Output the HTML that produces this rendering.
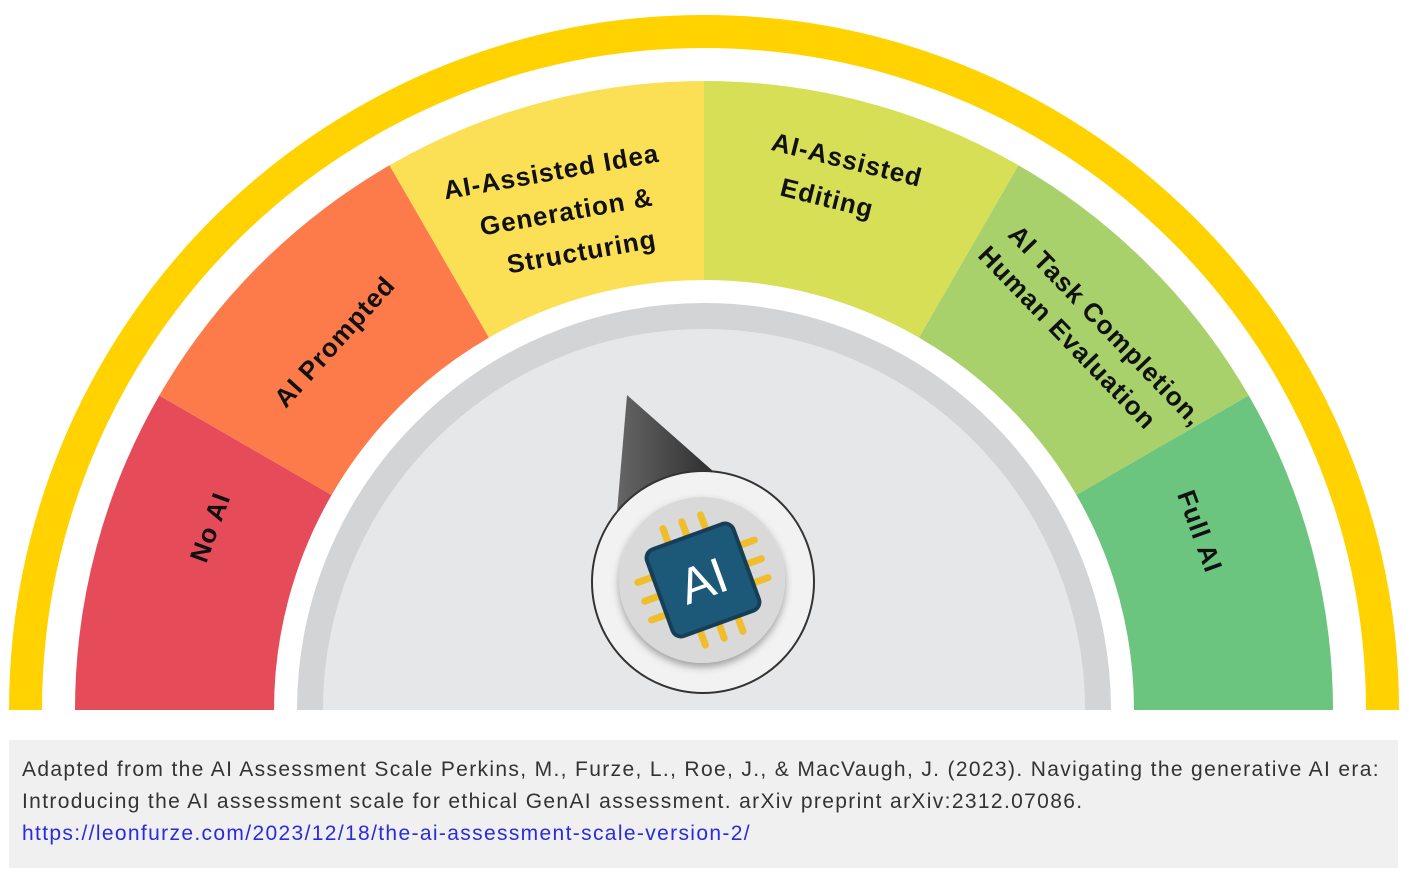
<!DOCTYPE html>
<html><head><meta charset="utf-8"><style>
html,body{margin:0;padding:0;background:#fff;width:1409px;height:874px;overflow:hidden}
.cap{position:absolute;left:9px;top:740px;width:1389px;height:128px;background:#f0f0f0;font-family:"Liberation Sans",sans-serif;font-size:21px;letter-spacing:1.35px;color:#333;line-height:32px;box-sizing:border-box;padding:14px 0 0 13px;white-space:nowrap;overflow:hidden}
.cap a{color:#2a2ae0;text-decoration:none}
</style></head><body>
<svg width="1409" height="740" style="position:absolute;left:0;top:0" font-family="Liberation Sans, sans-serif" font-weight="bold" font-size="26" letter-spacing="1" fill="#111">
<defs>
<clipPath id="c"><rect x="0" y="0" width="1409" height="710"/></clipPath>
<linearGradient id="n" x1="0" x2="1"><stop offset="0" stop-color="#666"/><stop offset="1" stop-color="#2e2e2e"/></linearGradient>
<filter id="sh" x="-20%" y="-20%" width="140%" height="140%"><feDropShadow dx="0" dy="4" stdDeviation="4" flood-opacity="0.35"/></filter>
</defs>
<g clip-path="url(#c)">
<circle cx="704" cy="710" r="678.5" fill="none" stroke="#ffd200" stroke-width="33"/>
<path d="M75,710 A629,629 0 0 1 159.3,395.5 L331.6,495 A430,430 0 0 0 274,710Z" fill="#e64b5a"/>
<path d="M159.3,395.5 A629,629 0 0 1 389.5,165.3 L489,337.6 A430,430 0 0 0 331.6,495Z" fill="#fd7b4b"/>
<path d="M389.5,165.3 A629,629 0 0 1 704,81 L704,280 A430,430 0 0 0 489,337.6Z" fill="#fbe055"/>
<path d="M704,81 A629,629 0 0 1 1018.5,165.3 L919,337.6 A430,430 0 0 0 704,280Z" fill="#d6df56"/>
<path d="M1018.5,165.3 A629,629 0 0 1 1248.7,395.5 L1076.4,495 A430,430 0 0 0 919,337.6Z" fill="#a8d16c"/>
<path d="M1248.7,395.5 A629,629 0 0 1 1333,710 L1134,710 A430,430 0 0 0 1076.4,495Z" fill="#6cc57e"/>
<circle cx="704" cy="710" r="394" fill="#e6e7e9" stroke="#d3d4d6" stroke-width="26"/>
</g>
<text transform="translate(212,528) rotate(-70)" text-anchor="middle" dominant-baseline="middle">No AI</text>
<text transform="translate(336,343) rotate(-48)" text-anchor="middle" dominant-baseline="middle">AI Prompted</text>
<g transform="translate(558,210) rotate(-10)" text-anchor="middle">
<text x="0" y="-30">AI-Assisted Idea</text>
<text x="8" y="12">Generation &amp;</text>
<text x="16" y="54">Structuring</text>
</g>
<g transform="translate(842,180) rotate(14)" text-anchor="middle">
<text x="0" y="-12">AI-Assisted</text>
<text x="-10" y="30">Editing</text>
</g>
<g transform="translate(1084,330) rotate(46)" text-anchor="middle">
<text x="12" y="-10">AI Task Completion,</text>
<text x="-6" y="26">Human Evaluation</text>
</g>
<text transform="translate(1198,532) rotate(70)" text-anchor="middle" dominant-baseline="middle">Full AI</text>
<polygon points="627,395 617,512 714,472" fill="url(#n)"/>
<circle cx="703" cy="582" r="111" fill="#f2f2f2" stroke="#333" stroke-width="2"/>
<circle cx="702" cy="580" r="83" fill="#d9d9d9" filter="url(#sh)"/>
<g transform="translate(703,580) rotate(-20)" stroke="#f0bd2c" stroke-width="7" stroke-linecap="round">
<line x1="-20" y1="-48" x2="-20" y2="-62"/><line x1="0" y1="-48" x2="0" y2="-62"/><line x1="20" y1="-48" x2="20" y2="-62"/>
<line x1="-20" y1="48" x2="-20" y2="62"/><line x1="0" y1="48" x2="0" y2="62"/><line x1="20" y1="48" x2="20" y2="62"/>
<line y1="-20" x1="-48" y2="-20" x2="-62"/><line y1="0" x1="-48" y2="0" x2="-62"/><line y1="20" x1="-48" y2="20" x2="-62"/>
<line y1="-20" x1="48" y2="-20" x2="62"/><line y1="0" x1="48" y2="0" x2="62"/><line y1="20" x1="48" y2="20" x2="62"/>
<rect x="-46" y="-46" width="92" height="92" rx="9" fill="#1c5877" stroke="#163f57" stroke-width="4"/>
<text x="0" y="18" text-anchor="middle" font-size="50" font-weight="normal" letter-spacing="0" fill="#fff" stroke="none">AI</text>
</g>
</svg>
<div class="cap">Adapted from the AI Assessment Scale Perkins, M., Furze, L., Roe, J., &amp; MacVaugh, J. (2023). Navigating the generative AI era:<br>Introducing the AI assessment scale for ethical GenAI assessment. arXiv preprint arXiv:2312.07086.<br><a>https://leonfurze.com/2023/12/18/the-ai-assessment-scale-version-2/</a></div>
</body></html>
